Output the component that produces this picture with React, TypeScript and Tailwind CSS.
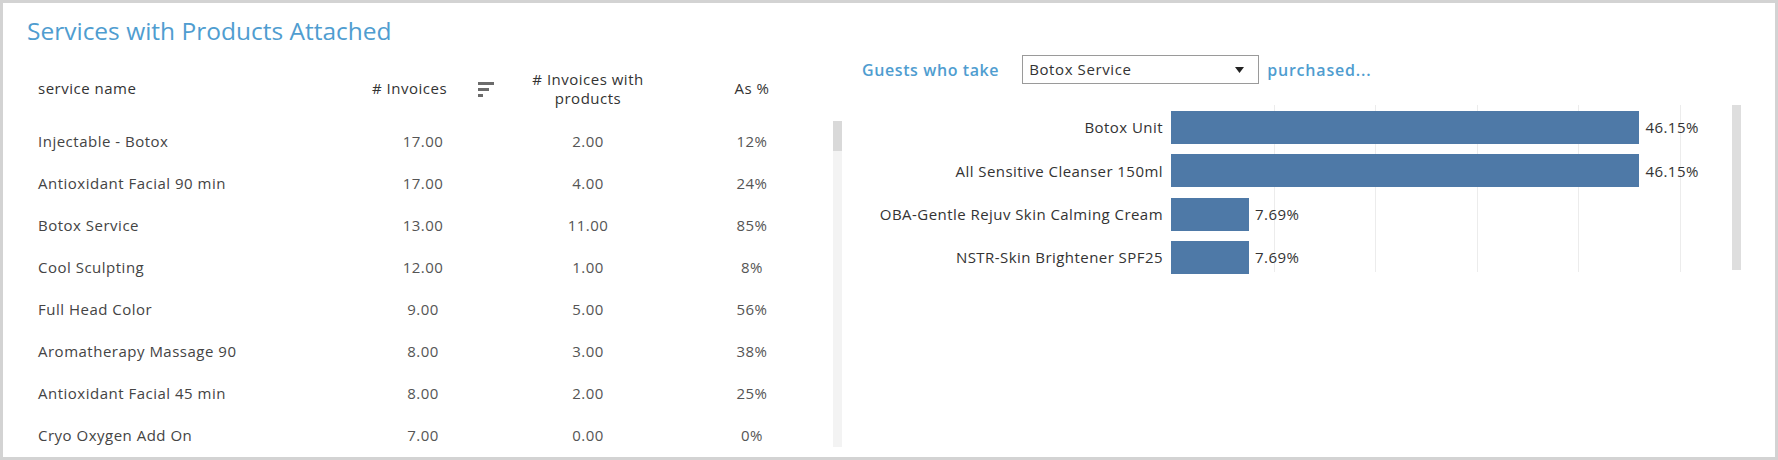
import React from 'react';

const services = [
  { name: 'Injectable - Botox', invoices: '17.00', withProducts: '2.00', pct: '12%' },
  { name: 'Antioxidant Facial 90 min', invoices: '17.00', withProducts: '4.00', pct: '24%' },
  { name: 'Botox Service', invoices: '13.00', withProducts: '11.00', pct: '85%' },
  { name: 'Cool Sculpting', invoices: '12.00', withProducts: '1.00', pct: '8%' },
  { name: 'Full Head Color', invoices: '9.00', withProducts: '5.00', pct: '56%' },
  { name: 'Aromatherapy Massage 90', invoices: '8.00', withProducts: '3.00', pct: '38%' },
  { name: 'Antioxidant Facial 45 min', invoices: '8.00', withProducts: '2.00', pct: '25%' },
  { name: 'Cryo Oxygen Add On', invoices: '7.00', withProducts: '0.00', pct: '0%' },
];

const products = [
  { name: 'Botox Unit', value: 46.15 },
  { name: 'All Sensitive Cleanser 150ml', value: 46.15 },
  { name: 'OBA-Gentle Rejuv Skin Calming Cream', value: 7.69 },
  { name: 'NSTR-Skin Brightener SPF25', value: 7.69 },
];

// px per 1% on the bar axis
const PX_PER_PCT = 10.15;
const gridlines = [10, 20, 30, 40, 50];

const SortIcon = () => (
  <div className="flex flex-col gap-[3px] pt-[1px]">
    <div className="w-[16px] h-[3px] bg-[#6b6b6b]" />
    <div className="w-[11px] h-[3px] bg-[#6b6b6b]" />
    <div className="w-[5px] h-[3px] bg-[#6b6b6b]" />
  </div>
);

const App = () => {
  return (
    <div
      className="w-[1778px] h-[460px] border-[3px] border-[#d3d3d3] bg-white flex flex-col overflow-hidden"
      style={{ fontFamily: '"Open Sans", "Lato", sans-serif' }}
    >
      {/* Title */}
      <div className="h-[47px] pl-[24px] pt-[13px] text-[24.5px] leading-[30px] text-[#4f9dd0] whitespace-nowrap">
        Services with Products Attached
      </div>

      <div className="flex flex-1 min-h-0">
        {/* Left: table */}
        <div className="w-[839px] shrink-0 pl-[34px] flex flex-col">
          <div className="h-[71px] pt-[6px] grid grid-cols-[335px_102px_46px_136px_56px_80px] items-center text-[15px] tracking-[0.5px] text-[#333]">
            <div className="pl-[1px]">service name</div>
            <div className="whitespace-nowrap">#&nbsp;Invoices</div>
            <div className="pl-[4px]">
              <SortIcon />
            </div>
            <div className="text-center leading-[19px] whitespace-nowrap">
              # Invoices with
              <br />
              products
            </div>
            <div />
            <div className="text-center">As %</div>
          </div>

          <div className="flex h-[326px]">
            <div className="w-[796px] overflow-hidden">
              <div className="-mt-[1px]">
                {services.map((s) => (
                  <div
                    key={s.name}
                    className="h-[42px] grid grid-cols-[335px_102px_46px_136px_56px_80px] items-center text-[15px] tracking-[0.5px] text-[#555]"
                  >
                    <div className="pl-[1px] text-[#444] whitespace-nowrap">{s.name}</div>
                    <div className="text-center">{s.invoices}</div>
                    <div />
                    <div className="text-center">{s.withProducts}</div>
                    <div />
                    <div className="text-center">{s.pct}</div>
                  </div>
                ))}
              </div>
            </div>
            <div className="w-[9px] bg-[#f3f3f3] flex flex-col">
              <div className="h-[30px] bg-[#d9d9d9]" />
            </div>
          </div>
        </div>

        {/* Right: chart */}
        <div className="flex-1 flex flex-col">
          <div className="mt-[5px] h-[29px] pl-[20px] flex items-center">
            <span className="text-[16px] font-semibold tracking-[0.6px] text-[#4f9dd0] whitespace-nowrap">Guests who take</span>
            <div className="ml-[23px] w-[237px] h-[29px] border border-[#9a9a9a] flex items-center justify-between pl-[6px] pr-[14px] text-[15px] tracking-[0.6px] text-[#333]">
              <span>Botox Service</span>
              <svg width="9" height="6" viewBox="0 0 9 6">
                <path d="M0 0 L9 0 L4.5 6 Z" fill="#222" />
              </svg>
            </div>
            <span className="ml-[8px] text-[16px] font-semibold tracking-[0.8px] text-[#4f9dd0]">purchased...</span>
          </div>

          <div className="mt-[21px] flex">
            <div className="w-[329px] shrink-0 pr-[8px] pt-[6px] flex flex-col gap-[10.3px]">
              {products.map((p) => (
                <div key={p.name} className="h-[33px] flex items-center justify-end text-[15px] tracking-[0.45px] text-[#333] whitespace-nowrap">
                  {p.name}
                </div>
              ))}
            </div>
            <div className="relative w-[561px] h-[167px] pt-[6px] flex flex-col gap-[10.3px]">
              {gridlines.map((g) => (
                <div
                  key={g}
                  className="absolute top-0 bottom-0 w-px bg-[#ececec]"
                  style={{ left: g * PX_PER_PCT + 1 }}
                />
              ))}
              {products.map((p) => (
                <div key={p.name} className="relative h-[33px] flex items-center">
                  <div className="h-[33px] bg-[#4e79a7]" style={{ width: p.value * PX_PER_PCT }} />
                  <span className="ml-[6px] text-[15px] tracking-[0.45px] text-[#333]">{p.value.toFixed(2)}%</span>
                </div>
              ))}
            </div>
            <div className="w-[9px] h-[165px] bg-[#dedede]" />
          </div>
        </div>
      </div>
    </div>
  );
};

export default App;
